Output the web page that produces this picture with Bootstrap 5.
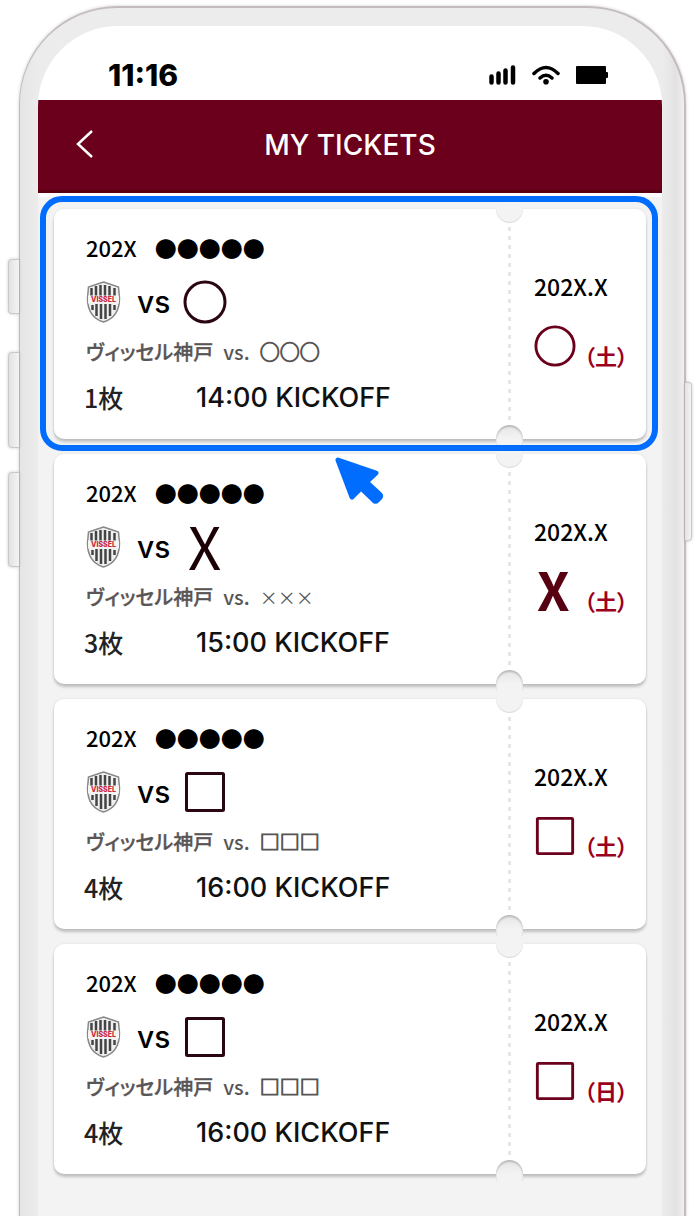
<!DOCTYPE html>
<html lang="ja">
<head>
<meta charset="utf-8">
<meta name="viewport" content="width=device-width, initial-scale=1">
<title>MY TICKETS</title>
<link href="https://cdn.jsdelivr.net/npm/bootstrap@5.3.0/dist/css/bootstrap.min.css" rel="stylesheet">
<style>
:root { --wine: #6a001b; --crimson: #9c0020; --page: #f3f3f3; --accent: #006dff; }
body { background: #fff; font-family: "Noto Sans CJK JP", "Noto Sans", sans-serif; color: #000; }
.phone {
  margin: 6px 12px 0 19px; min-height: calc(100vh - 6px);
  padding: 18px 22px 0 18px;
  background: linear-gradient(90deg, #e5e5e5, #ececec 18px, #ececec calc(100% - 22px), #e2e2e2 calc(100% - 8px), #f0f0f0);
  border: 1px solid #c4bcbc; border-width: 2px 2px 0 1px; border-radius: 98px 98px 0 0;
  box-shadow: 0 0 3px rgba(90, 70, 70, .3);
}
.side-key { width: 11px; background: linear-gradient(90deg, #e2e2e2, #f4f4f4); border: 1px solid #cdc6c6; box-shadow: 0 0 3px rgba(90, 70, 70, .3); }
.side-key.on-left { left: -12px; border-right: 0; border-radius: 4px 0 0 4px; }
.side-key.on-right { right: -8px; width: 7px; border-left: 0; border-radius: 0 4px 4px 0; }
.key-mute { top: 251px; height: 55px; }
.key-up { top: 344px; height: 96px; }
.key-down { top: 464px; height: 95px; }
.key-power { top: 374px; height: 159px; }
.phone-screen { background: var(--page); border-radius: 80px 80px 0 0; overflow: hidden; }
.status-bar { height: 74px; background: #fff; padding: 24px 54px 0 70px; }
.clock { font: 800 30px/50px Inter, sans-serif; }
.app-bar { height: 93px; background: var(--wine); border-bottom: 3px solid #5a0010; box-shadow: 0 4px 0 #fff; }
.app-bar h1 { font: 500 28px/90px Inter, sans-serif; }
.back-btn { left: 25px; top: 20px; width: 44px; height: 48px; }
.ticket-list { padding: 16px 16px 42px; gap: 15px; }
.ticket { display: grid; grid-template-columns: 455fr 137fr; height: 230px; background: #fff; border-radius: 10px; color: #000; text-decoration: none; box-shadow: 0 3px 3px rgba(0, 0, 0, .2), 0 0 3px rgba(0, 0, 0, .08); }
.ticket-main { padding: 22px 12px 20px 32px; gap: 12px; }
.ticket-date { padding: 60px 8px 0 25px; }
.ticket-date::before { content: ""; position: absolute; left: -1px; top: 18px; bottom: 18px; width: 3px; background: repeating-linear-gradient(#e6e6e6 0 4px, transparent 4px 9px); }
.notch { left: -13px; width: 27px; background: var(--page); }
.notch-top { top: -4px; height: 18px; border-radius: 0 0 14px 14px; box-shadow: inset 0 -1px 1px rgba(0, 0, 0, .1); }
.notch-bottom { bottom: -7px; height: 21px; border-radius: 14px 14px 0 0; background: linear-gradient(#e6e6e6, var(--page) 14px); box-shadow: inset 0 2px 2px rgba(0, 0, 0, .2); }
.season { height: 32px; font-size: 22px; font-weight: 500; gap: 18px; }
.versus { height: 50px; margin-top: 2px; }
.vs-word { font: 500 30px/50px Inter, sans-serif; width: 46px; margin-left: 16px; }
.versus-mark { color: #2a0610; }
.fixture { height: 26px; color: #595555; font-size: 20px; font-weight: 500; gap: 10px; font-feature-settings: "palt"; }
.fixture > span:first-child { -webkit-text-stroke: 0.3px #595555; }
.fixture-rival { font-feature-settings: normal; -webkit-text-stroke: 1px #595555; }
.fixture-cross { font-size: 18px; font-weight: 400; -webkit-text-stroke: 0; }
.entry { height: 42px; font-size: 25px; font-weight: 500; color: #222; margin-left: -2px; }
.entry-count { width: 112px; }
.entry-time { font: 500 27px/42px Inter, sans-serif; color: #111; }
.month { font-size: 23px; line-height: 34px; font-weight: 500; }
.day-row { height: 62px; margin-top: 12px; gap: 8px; color: var(--wine); }
.day-mark { width: 42px; }
.weekday { color: var(--crimson); font-size: 22px; line-height: 24px; font-weight: 700; margin-top: 18px; font-feature-settings: "palt"; }
.big-x { font-size: 58px; line-height: 46px; height: 50px; font-weight: 400; color: #1b0006; padding-left: 5px; }
.bold-x { font-size: 52px; line-height: 46px; height: 50px; font-weight: 700; color: #560012; padding-left: 3px; }
.focus-frame { inset: -13px -12px -12px -14px; border: 6px solid var(--accent); border-radius: 22px; z-index: 2; pointer-events: none; }
.pointer { left: 280px; top: 247px; z-index: 3; pointer-events: none; }
</style>
</head>
<body>
<svg class="d-none" aria-hidden="true">
  <symbol id="crest" viewBox="0 0 34 42">
    <path d="M17 1 L23 3 L32 6 L33 17 C33 30 27 38 17 41 C7 38 1 30 1 17 L2 6 L11 3Z" fill="#f0f0f0" stroke="#888" stroke-width="1.500"/>
    <path d="M5 7v8M9.500 5v10M14 4v11M18.500 4v11M23 5v10M28 7v8" stroke="#444" stroke-width="2.500"/>
    <path d="M6 24v5M10 23v12M14.500 23v15M19 23v15M23.500 23v12M28 24v5" stroke="#444" stroke-width="2.500"/>
    <path d="M1.500 14.500h31v8h-31z" fill="#f6f3f3"/>
    <text x="17" y="21" text-anchor="middle" font-family="Inter, sans-serif" font-size="7" font-weight="800" fill="#c8263c">VISSEL</text>
  </symbol>
  <symbol id="ring" viewBox="0 0 44 44"><circle cx="22" cy="22" r="20" fill="none" stroke="currentColor" stroke-width="3"/></symbol>
  <symbol id="box" viewBox="0 0 44 44"><rect x="3.500" y="3.500" width="37" height="37" rx="1" fill="none" stroke="currentColor" stroke-width="3"/></symbol>
</svg>

<div class="phone position-relative">
  <span class="side-key on-left key-mute position-absolute"></span>
  <span class="side-key on-left key-up position-absolute"></span>
  <span class="side-key on-left key-down position-absolute"></span>
  <span class="side-key on-right key-power position-absolute"></span>

  <div class="phone-screen">
    <div class="status-bar d-flex align-items-center justify-content-between">
      <span class="clock">11:16</span>
      <div class="d-flex align-items-center gap-3">
        <svg width="27" height="20" viewBox="0 0 27 20" aria-label="Signal"><path d="M2.500 11.500v6M9.500 8.500v9M16.500 5.500v12M24 2.500v15" stroke="#000" stroke-width="4.500" stroke-linecap="round"/></svg>
        <svg width="28" height="20" viewBox="0 0 28 20" aria-label="Wi-Fi"><path d="M2 8.500Q14-3.500 26 8.500M8 13Q14 7.500 20 13" fill="none" stroke="#000" stroke-width="3.500" stroke-linecap="round"/><circle cx="14" cy="16.800" r="2.800"/></svg>
        <svg width="32" height="20" viewBox="0 0 32 20" aria-label="Battery"><rect y="1" width="30" height="18" rx="1"/><rect x="29" y="7" width="3" height="6" rx="1"/></svg>
      </div>
    </div>

    <header class="app-bar position-relative text-center">
      <button type="button" class="back-btn btn p-0 border-0 position-absolute d-flex align-items-center justify-content-center" aria-label="Back">
        <svg width="20" height="30" viewBox="0 0 20 30"><path d="M17 2 3 15l14 13" fill="none" stroke="#fff" stroke-width="2.500"/></svg>
      </button>
      <h1 class="text-white m-0">MY TICKETS</h1>
    </header>

    <main class="ticket-list d-flex flex-column">
      <a href="#ticket-1" class="ticket position-relative">
        <div class="ticket-main d-flex flex-column">
          <div class="season d-flex align-items-center"><span>202X</span><span>●●●●●</span></div>
          <div class="versus d-flex align-items-center"><svg width="35" height="42"><use href="#crest"/></svg><span class="vs-word">vs</span><svg class="versus-mark" width="44" height="44"><use href="#ring"/></svg></div>
          <div class="fixture d-flex align-items-center"><span>ヴィッセル神戸</span><span>vs.</span><span class="fixture-rival">○○○</span></div>
          <div class="entry d-flex align-items-center"><span class="entry-count">1枚</span><span class="entry-time">14:00 KICKOFF</span></div>
        </div>
        <div class="ticket-date position-relative">
          <span class="notch notch-top position-absolute"></span><span class="notch notch-bottom position-absolute"></span>
          <div class="month">202X.X</div>
          <div class="day-row d-flex align-items-center"><svg class="day-mark" height="42"><use href="#ring"/></svg><span class="weekday">（土）</span></div>
        </div>
        <span class="focus-frame position-absolute"></span>
        <svg class="pointer position-absolute" width="52" height="52" viewBox="0 0 52 52"><path d="M4 4 42 17 32.500 26 46 38.500a2 2 0 0 1 0 3l-3 3a2 2 0 0 1-3 0L27 32 18 41Z" fill="#006dff" stroke="#006dff" stroke-width="5" stroke-linejoin="round"/></svg>
      </a>

      <a href="#ticket-2" class="ticket">
        <div class="ticket-main d-flex flex-column">
          <div class="season d-flex align-items-center"><span>202X</span><span>●●●●●</span></div>
          <div class="versus d-flex align-items-center"><svg width="35" height="42"><use href="#crest"/></svg><span class="vs-word">vs</span><span class="big-x">X</span></div>
          <div class="fixture d-flex align-items-center"><span>ヴィッセル神戸</span><span>vs.</span><span class="fixture-rival fixture-cross">×××</span></div>
          <div class="entry d-flex align-items-center"><span class="entry-count">3枚</span><span class="entry-time">15:00 KICKOFF</span></div>
        </div>
        <div class="ticket-date position-relative">
          <span class="notch notch-top position-absolute"></span><span class="notch notch-bottom position-absolute"></span>
          <div class="month">202X.X</div>
          <div class="day-row d-flex align-items-center"><span class="day-mark bold-x">X</span><span class="weekday">（土）</span></div>
        </div>
      </a>

      <a href="#ticket-3" class="ticket">
        <div class="ticket-main d-flex flex-column">
          <div class="season d-flex align-items-center"><span>202X</span><span>●●●●●</span></div>
          <div class="versus d-flex align-items-center"><svg width="35" height="42"><use href="#crest"/></svg><span class="vs-word">vs</span><svg class="versus-mark" width="44" height="44"><use href="#box"/></svg></div>
          <div class="fixture d-flex align-items-center"><span>ヴィッセル神戸</span><span>vs.</span><span class="fixture-rival">□□□</span></div>
          <div class="entry d-flex align-items-center"><span class="entry-count">4枚</span><span class="entry-time">16:00 KICKOFF</span></div>
        </div>
        <div class="ticket-date position-relative">
          <span class="notch notch-top position-absolute"></span><span class="notch notch-bottom position-absolute"></span>
          <div class="month">202X.X</div>
          <div class="day-row d-flex align-items-center"><svg class="day-mark" height="42"><use href="#box"/></svg><span class="weekday">（土）</span></div>
        </div>
      </a>

      <a href="#ticket-4" class="ticket">
        <div class="ticket-main d-flex flex-column">
          <div class="season d-flex align-items-center"><span>202X</span><span>●●●●●</span></div>
          <div class="versus d-flex align-items-center"><svg width="35" height="42"><use href="#crest"/></svg><span class="vs-word">vs</span><svg class="versus-mark" width="44" height="44"><use href="#box"/></svg></div>
          <div class="fixture d-flex align-items-center"><span>ヴィッセル神戸</span><span>vs.</span><span class="fixture-rival">□□□</span></div>
          <div class="entry d-flex align-items-center"><span class="entry-count">4枚</span><span class="entry-time">16:00 KICKOFF</span></div>
        </div>
        <div class="ticket-date position-relative">
          <span class="notch notch-top position-absolute"></span><span class="notch notch-bottom position-absolute"></span>
          <div class="month">202X.X</div>
          <div class="day-row d-flex align-items-center"><svg class="day-mark" height="42"><use href="#box"/></svg><span class="weekday">（日）</span></div>
        </div>
      </a>
    </main>
  </div>
</div>
<script src="https://cdn.jsdelivr.net/npm/bootstrap@5.3.0/dist/js/bootstrap.bundle.min.js"></script>
</body>
</html>
